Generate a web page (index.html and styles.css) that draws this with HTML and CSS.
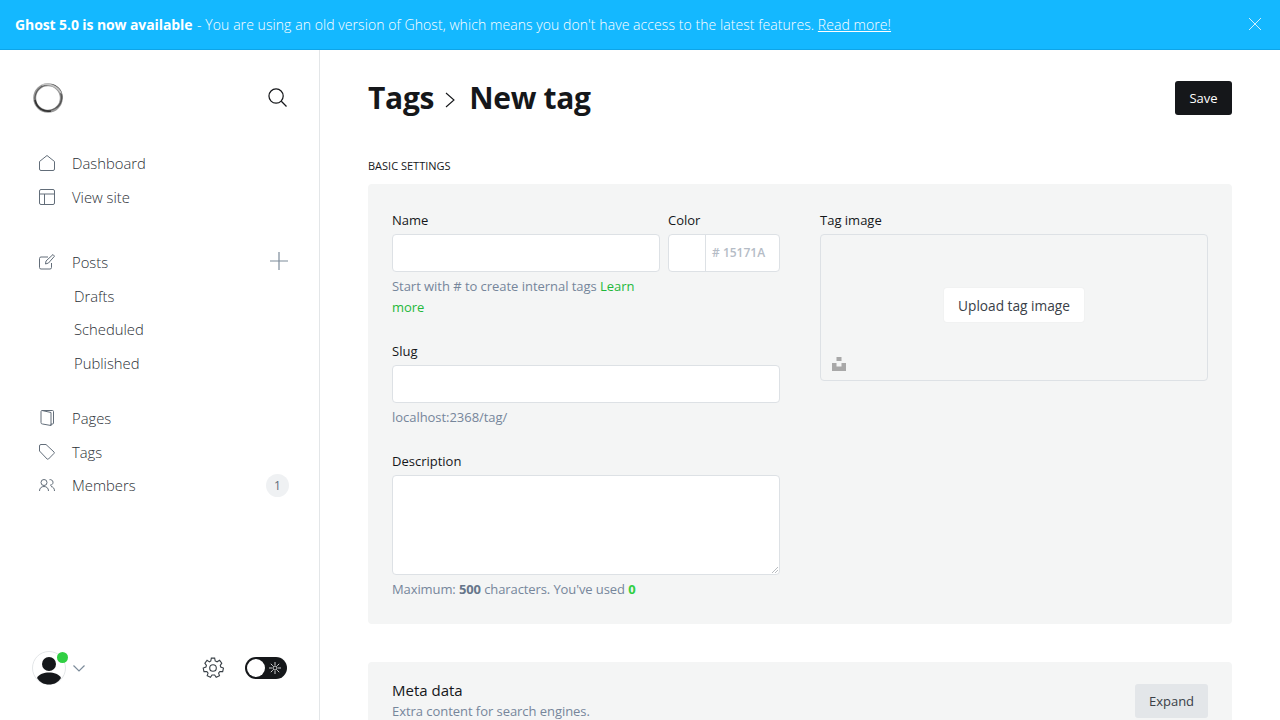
FILE: index.html
```html
<!DOCTYPE html>
<html lang="en">
<head>
<meta charset="utf-8">
<title>Tags - New tag</title>
<link rel="stylesheet" href="styles.css">
</head>
<body>
<div class="banner">
  <p class="banner-text"><strong>Ghost 5.0 is now available</strong> - You are using an old version of Ghost, which means you don't have access to the latest features. <a href="#">Read more!</a></p>
  <svg class="banner-close" viewBox="0 0 14 14"><path d="M1 1l12 12M13 1L1 13"/></svg>
</div>
<div class="shell">
  <aside class="sidebar">
    <div class="side-head">
      <svg class="logo" viewBox="0 0 30 30"><circle cx="15" cy="15" r="13.300" class="logo-a"/><ellipse cx="15.500" cy="14.500" rx="13.800" ry="12.800" transform="rotate(-30 15.500 14.500)" class="logo-b"/><path d="M2 17C3.500 25 11 29.500 18 28" class="logo-c"/><path d="M9 2C16 0 25 3 28.500 11" class="logo-d"/><path d="M27.800 10c1.500 6 0 12-4.500 15" class="logo-e"/></svg>
      <svg class="search" viewBox="0 0 20 20"><circle cx="8.500" cy="8.500" r="7.500"/><path d="M14 14l5.500 5.500"/></svg>
    </div>
    <nav class="nav">
      <ul class="nav-group">
        <li class="nav-item"><svg class="ico" viewBox="0 0 16 16"><path d="M.5 6.500L8 .5l7.500 6v7.500a1.500 1.500 0 0 1-1.500 1.500H2A1.500 1.500 0 0 1 .5 14z"/></svg><span>Dashboard</span></li>
        <li class="nav-item"><svg class="ico" viewBox="0 0 16 16"><rect x=".5" y=".5" width="15" height="15" rx="1.500"/><path d="M.5 5h15M5.500 5v10.500"/></svg><span>View site</span></li>
      </ul>
      <ul class="nav-group nav-group-posts">
        <li class="nav-item nav-posts"><svg class="ico" viewBox="0 0 16 16"><path d="M9 3H2A1.500 1.500 0 0 0 .5 4.500v9A1.500 1.500 0 0 0 2 15h9a1.500 1.500 0 0 0 1.500-1.500V9"/><path d="M6.500 10l.5-3 7-6.500 1.500 1.700L9.500 9z"/></svg><span>Posts</span><svg class="plus" viewBox="0 0 18 18"><path d="M9 0v18M0 9h18"/></svg></li>
        <li class="nav-sub">Drafts</li>
        <li class="nav-sub">Scheduled</li>
        <li class="nav-sub">Published</li>
      </ul>
      <ul class="nav-group nav-group-pages">
        <li class="nav-item"><svg class="ico" viewBox="0 0 16 16"><path d="M3 .5h10.500a1 1 0 0 1 1 1V13a1 1 0 0 1-1 1H12v1.500L3.500 14a1.500 1.500 0 0 1-1.500-1.500V1.500a1 1 0 0 1 1-1z"/><path d="M12 2.500v13M3 .5l9 2"/></svg><span>Pages</span></li>
        <li class="nav-item"><svg class="ico" viewBox="0 0 16 16"><path d="M.5 2A1.500 1.500 0 0 1 2 .5h5l8 7.500a1 1 0 0 1 0 1.400L9.500 15a1 1 0 0 1-1.400 0L.5 7z"/></svg><span>Tags</span></li>
        <li class="nav-item nav-members"><svg class="ico" viewBox="0 0 16 16"><circle cx="5" cy="5.500" r="3"/><path d="M.5 14c0-3 2-4.500 4.500-4.500s4.500 1.500 4.500 4.500M10.500 2.700a2.800 2.800 0 1 1 .5 5.500M12 9.500c2 .3 3.500 1.800 3.500 4.500"/></svg><span>Members</span><span class="badge">1</span></li>
      </ul>
    </nav>
    <div class="side-foot">
      <div class="user">
        <div class="avatar"><svg viewBox="0 0 34 34"><circle cx="17" cy="17" r="16.500" class="av-ring"/><circle cx="17" cy="13" r="7"/><path d="M5 27c2-4 7-5.500 12-5.500S27 23 29 27c-3 4.500-7 6.500-12 6.500S8 31.500 5 27z"/></svg><span class="dot"></span></div>
        <svg class="chev" viewBox="0 0 12 7"><path d="M.5.500L6 6 11.500.500"/></svg>
      </div>
      <div class="foot-right">
        <svg class="gear" viewBox="0 0 20 20"><circle cx="10" cy="10" r="3"/><path d="M8.500 1h3l.5 2.600 1.700.8L16 3l2 2.600-1.400 2 .4 1.500 2.500 1-.7 3.200-2.600-.1-1.100 1.400.8 2.400-3 1.400-1.400-2.100H9.100L7.700 18.400l-3-1.400.8-2.400-1.100-1.400-2.600.1L1.100 10.100l2.500-1 .4-1.500-1.400-2L4.600 3l2.200 1.400L8 3.600z"/></svg>
        <div class="toggle"><span class="knob"></span><svg class="sun" viewBox="0 0 12 12"><circle cx="6" cy="6" r="2"/><path d="M6 0v3M6 9v3M0 6h3M9 6h3M1.800 1.800l2 2M8.200 8.200l2 2M10.200 1.800l-2 2M3.800 8.200l-2 2"/></svg></div>
      </div>
    </div>
  </aside>
  <main class="main">
    <header class="page-head">
      <h1 class="title"><span>Tags</span><svg class="crumb" viewBox="0 0 10 16"><path d="M1 1l8 7-8 7"/></svg><span>New tag</span></h1>
      <button class="btn-save">Save</button>
    </header>
    <h2 class="section-label">BASIC SETTINGS</h2>
    <section class="card card-basic">
      <div class="col">
        <div class="row-name">
          <div class="field field-name">
            <label class="label">Name</label>
            <input class="input" type="text">
            <p class="hint">Start with # to create internal tags <a href="#">Learn more</a></p>
          </div>
          <div class="field field-color">
            <label class="label">Color</label>
            <div class="color"><span class="swatch"></span><span class="hex"><i>#</i> 15171A</span></div>
          </div>
        </div>
        <div class="field field-slug">
          <label class="label">Slug</label>
          <input class="input" type="text">
          <p class="hint">localhost:2368/tag/</p>
        </div>
        <div class="field field-desc">
          <label class="label">Description</label>
          <textarea class="textarea"></textarea>
          <p class="hint hint-count">Maximum: <b>500</b> characters. You've used <b class="ok">0</b></p>
        </div>
      </div>
      <div class="col">
        <label class="label">Tag image</label>
        <div class="uploader">
          <button class="btn-upload">Upload tag image</button>
          <svg class="unsplash" viewBox="0 0 14 14"><path d="M4.500 0h5v4h-5zM0 6h4.500v3.500h5V6H14v8H0z"/></svg>
        </div>
      </div>
    </section>
    <section class="card card-meta">
      <div>
        <h3 class="meta-title">Meta data</h3>
        <p class="meta-sub">Extra content for search engines.</p>
      </div>
      <button class="btn-expand">Expand</button>
    </section>
  </main>
</div>
</body>
</html>
```
FILE: styles.css
```css
* { box-sizing: border-box; }
html, body { margin: 0; height: 100%; overflow: hidden; }
body { font-family: "Open Sans", "Noto Sans", sans-serif; color: #15171a; background: #fff; display: flex; flex-direction: column; }
ul { list-style: none; margin: 0; padding: 0; }
p, h1, h2, h3 { margin: 0; }
a { color: inherit; }
svg { display: block; flex: none; fill: none; stroke: currentColor; }

.banner { height: 50px; flex: none; background: #14b8ff; border-bottom: 1px solid #0ea5e8; color: #fff; display: flex; align-items: center; justify-content: space-between; padding: 0 18px 1px 15px; }
.banner-text { font-size: 14px; letter-spacing: .07px; font-weight: 300; }
.banner-text strong { font-weight: 700; letter-spacing: -.1px; margin-right: 1px; }
.banner-close { width: 14px; height: 14px; stroke-width: .8; }

.shell { flex: 1; display: flex; min-height: 0; }
.sidebar { width: 320px; flex: none; border-right: 1px solid #e3e6e8; padding: 33px 30px 0 32px; display: flex; flex-direction: column; }
.side-head { display: flex; justify-content: space-between; align-items: center; height: 30px; margin-bottom: 33.500px; padding-left: 1px; }
.logo { width: 30px; height: 30px; }
.logo-a { stroke: #999; stroke-width: 3; }
.logo-b { stroke: #555; stroke-width: 1; }
.logo-c { stroke: #333; stroke-width: 1.600; }
.logo-d { stroke: #c4c4c4; stroke-width: 1.500; }
.logo-e { stroke: #555; stroke-width: 1.200; }
.search { width: 19px; height: 19px; stroke-width: 1.300; margin: 0 2px 1px 0; color: #15171a; }

.nav { display: flex; flex-direction: column; flex: 1; }
.nav-group { display: flex; flex-direction: column; }
.nav-group-posts { margin-top: 32px; }
.nav-group-pages { margin-top: 22px; }
.nav-item { display: flex; align-items: center; height: 33.500px; padding-left: 7px; font-size: 14.800px; font-weight: 300; color: #2b3036; }
.nav-item > span:first-of-type { margin-left: 17px; }
.ico { width: 16px; height: 16px; stroke-width: 1; color: #626d79; }
.plus { width: 18px; height: 18px; margin: 0 1px 2px auto; color: #7c8b9a; stroke-width: 1.200; }
.nav-sub { height: 33.500px; display: flex; align-items: center; padding-left: 42px; font-size: 14.800px; font-weight: 300; color: #2b3036; }
.badge { margin-left: auto; width: 23px; height: 23px; border-radius: 50%; background: #eff1f3; color: #626d79; font-size: 12px; font-weight: 400; display: flex; align-items: center; justify-content: center; }

.side-foot { display: flex; justify-content: space-between; align-items: center; height: 36px; margin-bottom: 34px; }
.user { display: flex; align-items: center; gap: 7px; }
.avatar { position: relative; width: 34px; height: 34px; }
.avatar svg { width: 34px; height: 34px; fill: #15171a; stroke: none; }
.avatar .av-ring { fill: #fff; stroke: #e3e6e8; stroke-width: 1; }
.dot { position: absolute; top: 1px; right: -2px; width: 11px; height: 11px; border-radius: 50%; background: #30cf43; }
.chev { width: 12px; height: 7px; color: #7c8b9a; stroke-width: 1.200; }
.foot-right { display: flex; align-items: center; gap: 21px; padding-right: 2px; }
.gear { width: 22px; height: 22px; stroke-width: 1; color: #394047; }
.toggle { width: 42px; height: 22px; border-radius: 11px; background: #15171a; display: flex; align-items: center; justify-content: space-between; padding: 0 6px 0 2px; }
.knob { width: 18px; height: 18px; border-radius: 50%; background: #fff; }
.sun { width: 12px; height: 12px; color: #fff; stroke-width: .8; }

.main { flex: 1; min-width: 0; padding: 31px 48px 0; }
.page-head { display: flex; justify-content: space-between; align-items: center; height: 34px; margin-bottom: 43px; }
.title { display: flex; align-items: center; gap: 11px; font-size: 30px; font-weight: 700; letter-spacing: -.3px; line-height: 34px; color: #15171a; }
.crumb { width: 10px; height: 16px; stroke-width: 1.100; margin-top: 4px; margin-right: 3px; }
.btn-save { width: 57px; height: 34px; border: 0; border-radius: 3px; background: #15171a; color: #fff; font: 13px "Open Sans", sans-serif; padding: 0; }
.section-label { font-size: 11px; font-weight: 400; height: 15px; margin-bottom: 11px; color: #15171a; }

.card { background: #f4f5f5; border-radius: 4px; }
.card-basic { height: 440px; padding: 28px 24px 0; display: grid; grid-template-columns: 388px 388px; column-gap: 40px; margin-bottom: 38px; }
.col { min-width: 0; }
.row-name { display: flex; gap: 8px; }
.field-name { width: 268px; height: 131px; }
.field-color { width: 112px; }
.field-slug { height: 110px; }
.label { display: block; font-size: 13px; line-height: 17px; height: 22px; color: #15171a; }
.input { display: block; width: 100%; height: 38px; background: #fff; border: 1px solid #dde1e5; border-radius: 4px; padding: 0; margin: 0; }
.textarea { display: block; width: 100%; height: 100px; background: #fff; border: 1px solid #dde1e5; border-radius: 4px; padding: 0; margin: 0; resize: vertical; }
.textarea::-webkit-resizer { background: linear-gradient(135deg, transparent 50%, #b8bcc0 50%, #b8bcc0 60%, transparent 60%, transparent 75%, #b8bcc0 75%, #b8bcc0 85%, transparent 85%) no-repeat right 1px bottom 1px / 7px 7px; }
.hint { font-size: 13px; line-height: 21px; color: #76869b; margin-top: 4px; letter-spacing: -.04px; }
.hint-count { letter-spacing: -.1px; }
.hint a { color: #1fb83a; text-decoration: none; }
.hint b { font-weight: 700; color: #66768a; }
.hint .ok { color: #30cf43; }
.color { display: flex; height: 38px; background: #fff; border: 1px solid #dde1e5; border-radius: 4px; }
.swatch { width: 37px; border-right: 1px solid #dde1e5; }
.hex { font-size: 12px; font-weight: 600; color: #b5bcc6; padding-left: 6px; line-height: 36px; }
.hex i { font-style: normal; }
.uploader { position: relative; height: 147px; border: 1px solid #dde1e5; border-radius: 4px; display: flex; justify-content: center; padding-top: 53px; }
.btn-upload { width: 140px; height: 34px; border: 0; background: #fff; border-radius: 3px; box-shadow: 0 0 2px rgba(0,0,0,.06); font: 13.700px "Open Sans", sans-serif; color: #394047; padding: 0; }
.unsplash { position: absolute; left: 11px; bottom: 9px; width: 14px; height: 14px; fill: #a8a8a8; stroke: none; }

.card-meta { height: 120px; padding: 18px 24px 0; display: flex; justify-content: space-between; align-items: flex-start; }
.meta-title { font-size: 15px; font-weight: 400; line-height: 20px; color: #15171a; }
.meta-sub { font-size: 13px; line-height: 20px; color: #76869b; margin-top: 1px; letter-spacing: -.05px; }
.btn-expand { width: 73px; height: 34px; margin-top: 4px; border: 0; border-radius: 3px; background: #e3e6e9; color: #394047; font: 13px "Open Sans", sans-serif; padding: 0; }
```
